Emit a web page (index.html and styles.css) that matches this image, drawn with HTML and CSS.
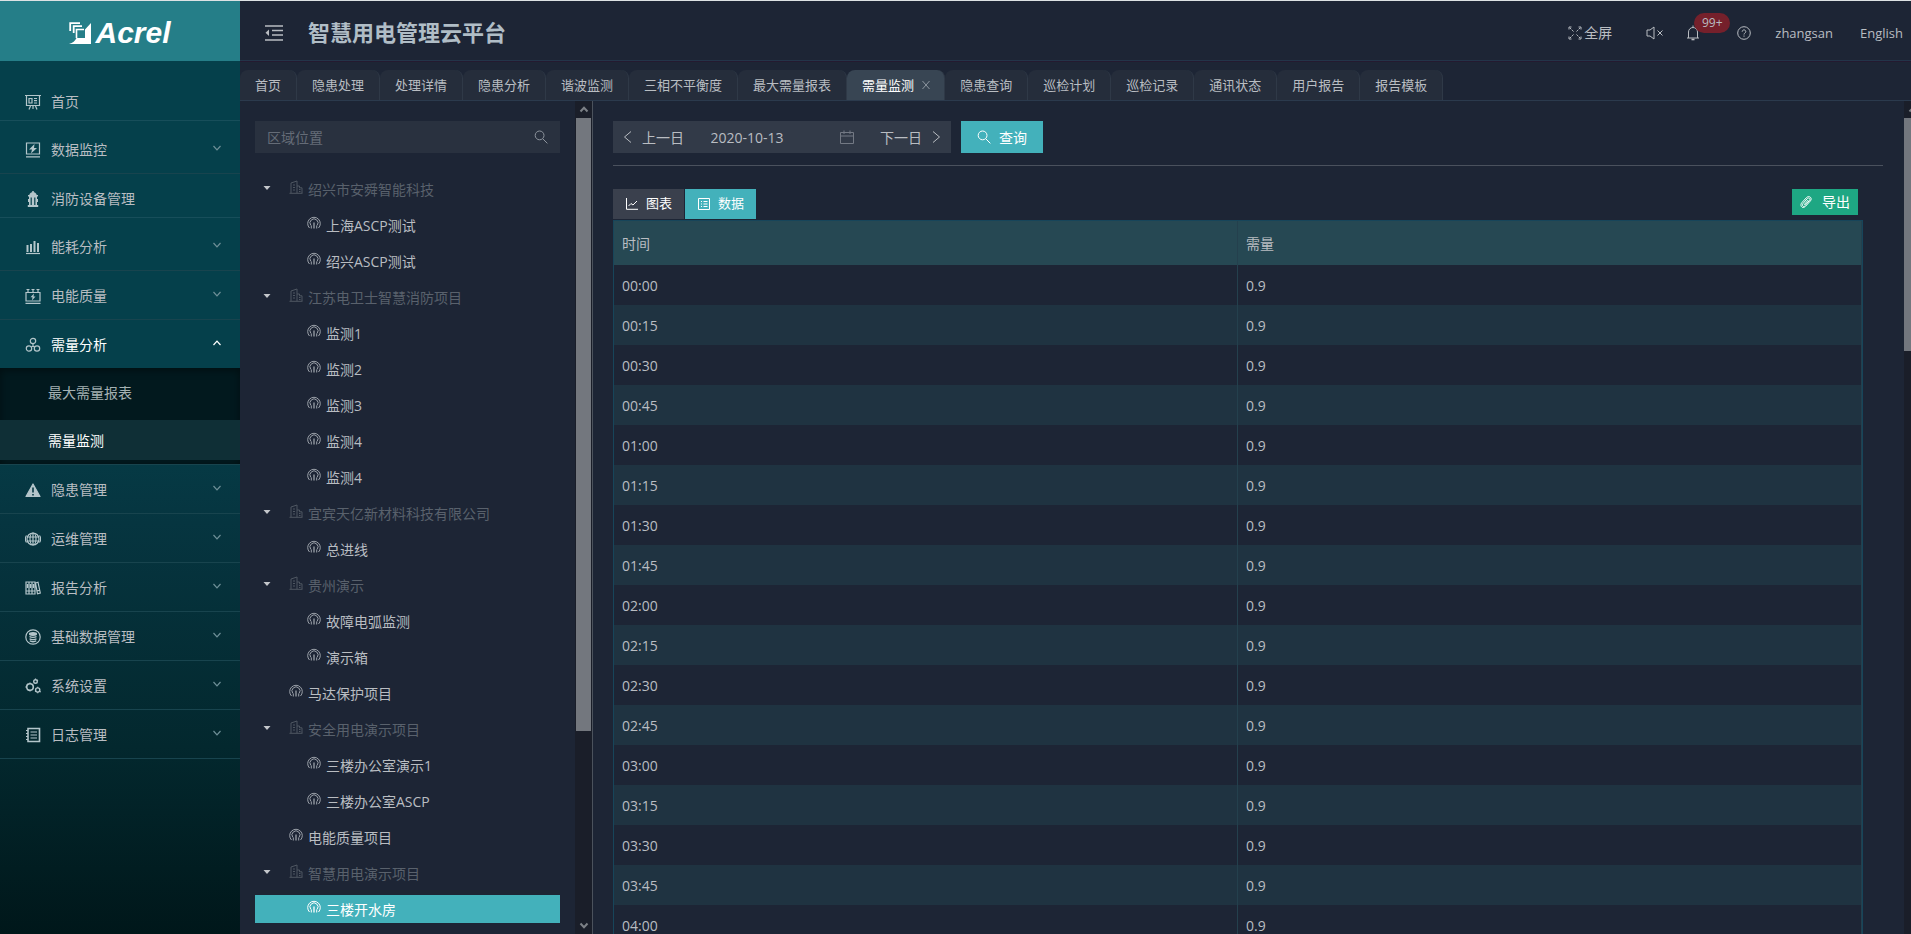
FILE: index.html
```html
<!DOCTYPE html>
<html lang="zh-CN">
<head>
    <meta charset="UTF-8">
    <meta name="viewport" content="width=device-width, initial-scale=1.0">
    <title>智慧用电管理云平台</title>
    <link rel="stylesheet" href="styles.css">
</head>
<body>
    <svg class="sprite" aria-hidden="true">
        <symbol id="i-down" viewBox="0 0 10 10"><path d="M1.5 3 5 6.8 8.500 3"/></symbol>
        <symbol id="i-up" viewBox="0 0 10 10"><path d="M1.5 7 5 3.200 8.500 7"/></symbol>
        <symbol id="i-left" viewBox="0 0 14 14"><path d="M10 1.5 3.5 7l6.5 5.5"/></symbol>
        <symbol id="i-right" viewBox="0 0 14 14"><path d="M4 1.5 10.5 7 4 12.5"/></symbol>
        <symbol id="i-search" viewBox="0 0 14 14"><circle cx="5.6" cy="5.4" r="4.4"/><path d="m8.8 8.8 4.6 4.6"/></symbol>
        <symbol id="i-building" viewBox="0 0 14 14"><path d="M.5 13.3h13M2 13V3l6-2v12M8 6h2.500v1.800H13V13M4 5h2M4 7.500h2M4 10h2M10 9.500h1.500M10 11.500h1.500"/></symbol>
        <symbol id="i-gauge" viewBox="0 0 14 14"><path d="M2.500 12A6.300 6.300 0 1 1 11.500 12M3.800 9.300A4 4 0 1 1 10.200 9.300M4.300 9.500v3M9.700 9.500v3"/><path d="M7 6.500v6" stroke-width="1.300"/></symbol>
        <symbol id="i-caret" viewBox="0 0 8 8"><path d="M.5 2h7L4 6z" fill="currentColor" stroke="none"/></symbol>
    </svg>

    <div class="layout">
        <aside class="sidebar">
            <a class="logo" href="#">
                <svg viewBox="0 0 22 22"><path d="M1.200 9V1.200H11M4.700 11V4.200H13" stroke-width="1.800"/><path d="M7.500 16V7.500H15" stroke-width="1.600"/><path d="M22 1v21H0c4-1 6-3 7.500-6H16V7.500z" fill="#fff" stroke="none"/></svg>
                <span>Acrel</span>
            </a>
            <ul class="menu">
                <li class="leaf"><a href="#"><svg viewBox="0 0 16 16"><path d="M0 1.500h16M1.500 2v9.500h13V2M4 4.500h3V9H4zM9 4.500h3M9 6.700h3M9 9h3M5.500 12 4 15.500M10.500 12l1.500 3.500M8 12v3"/></svg><span>首页</span></a></li>
                <li class="sub"><a href="#"><svg viewBox="0 0 16 16"><path d="M1.500 1h13v11h-13zM1 14.800h14"/><path d="M9.500 2 4 7.500h3L6 11.500l6-5.500H9z" fill="currentColor" stroke="none"/></svg><span>数据监控</span><svg class="arrow"><use href="#i-down"/></svg></a></li>
                <li class="leaf"><a href="#"><svg viewBox="0 0 16 16"><path d="M7.200 0h1.600v1.300c1.600.3 2.700 1.300 2.900 2.700H13v1.500h-1V8h1v3h-1v3h1.200v2H2.800v-2H4v-3H3V8h1V5.500H3V4h1.300c.2-1.400 1.300-2.400 2.900-2.700z" fill="currentColor" stroke="none"/><path d="M6.200 6.500V14M9.800 6.500V14" stroke="#05404b"/></svg><span>消防设备管理</span></a></li>
                <li class="sub"><a href="#"><svg viewBox="0 0 16 16"><path d="M1 14.500h14"/><path d="M2.500 6v7M6 5v8M9.500 2v11M13 4v9" stroke-width="2"/></svg><span>能耗分析</span><svg class="arrow"><use href="#i-down"/></svg></a></li>
                <li class="sub"><a href="#"><svg viewBox="0 0 16 16"><path d="M1 4.500h14V13H1zM.5 15.300h15M3 4V1.500M8 4V1.500M13 4V1.500M1.500 1.500h3M6.500 1.500h3M11.500 1.500h3"/><path d="M9 5.500 5.500 9.300h2L7 12.500l3.500-4h-2z" fill="currentColor" stroke="none"/></svg><span>电能质量</span><svg class="arrow"><use href="#i-down"/></svg></a></li>
                <li class="sub open">
                    <a href="#"><svg viewBox="0 0 16 16"><circle cx="8" cy="4" r="2.700"/><circle cx="4" cy="11.500" r="2.700"/><circle cx="12" cy="11.500" r="2.700"/><path d="M8 6.700v2.500M6.200 10 8 9.200l1.800.8"/></svg><span>需量分析</span><svg class="arrow"><use href="#i-up"/></svg></a>
                    <ul class="submenu">
                        <li><a href="#">最大需量报表</a></li>
                        <li class="active"><a href="#">需量监测</a></li>
                    </ul>
                </li>
                <li class="sub"><a href="#"><svg viewBox="0 0 16 16"><path d="M8 2 15 14.500H1z" fill="currentColor" stroke-linejoin="round"/><path d="M8 5.500v5M8 12v1.500" stroke="#063642" stroke-width="1.600"/></svg><span>隐患管理</span><svg class="arrow"><use href="#i-down"/></svg></a></li>
                <li class="sub"><a href="#"><svg viewBox="0 0 16 16"><circle cx="8" cy="8" r="6"/><ellipse cx="8" cy="8" rx="3" ry="6"/><path d="M2 6h12M2 10h12M8 2v12M1.500 4.500c-1.300 2-1.300 5 0 7M14.500 4.500c1.300 2 1.300 5 0 7"/></svg><span>运维管理</span><svg class="arrow"><use href="#i-down"/></svg></a></li>
                <li class="sub"><a href="#"><svg viewBox="0 0 16 16"><path d="M1 2h9v12H1zM4 2v12M7 2v12M1 11h9M2.500 4v4M5.500 4v4M8.500 4v4M10.500 3l2.500-.8L15.300 13l-2.800.8zM12 11l3-.8"/></svg><span>报告分析</span><svg class="arrow"><use href="#i-down"/></svg></a></li>
                <li class="sub"><a href="#"><svg viewBox="0 0 16 16"><circle cx="8" cy="8" r="7.200"/><ellipse cx="8" cy="5" rx="3.500" ry="1.300" fill="currentColor"/><path d="M4.500 7.500c1.500 1.200 5.500 1.200 7 0M4.500 9.700c1.500 1.200 5.500 1.200 7 0M4.800 11.800c1.500 1.200 5 1.200 6.400 0" stroke-width="1.400"/></svg><span>基础数据管理</span><svg class="arrow"><use href="#i-down"/></svg></a></li>
                <li class="sub"><a href="#"><svg viewBox="0 0 16 16"><circle cx="5" cy="9" r="3.300" stroke-width="1.600"/><circle cx="10.500" cy="3.500" r="1.800" stroke-width="1.400"/><circle cx="12.700" cy="12" r="2.100" stroke-width="1.400"/><path d="M5 4.500v1M5 12.500v1M.3 9h1M2 6l.7.7M2 12l.7-.7M10.500.5v1M13 2l-1 .6M12.700 8.700v1M12.700 14.300v1M15 13.500l.8.500M10 13.500l.8-.5"/></svg><span>系统设置</span><svg class="arrow"><use href="#i-down"/></svg></a></li>
                <li class="sub"><a href="#"><svg viewBox="0 0 16 16"><path d="M3 1.500h11.500v13H3z" stroke-width="1.600"/><path d="M5.500 5h6.500M5.500 8h6.500M5.500 11h6.500M1 3.500h2M1 6.500h2M1 9.500h2M1 12.500h2"/></svg><span>日志管理</span><svg class="arrow"><use href="#i-down"/></svg></a></li>
            </ul>
        </aside>

        <div class="page">
            <header class="header">
                <button class="fold" aria-label="收起菜单"><svg viewBox="0 0 18 18"><path d="M0 2h18M7 6.500h11M7 11h11M0 16h18" stroke-width="1.600"/><path d="M4 5.500v6.500L.5 8.800z" fill="currentColor" stroke="none"/></svg></button>
                <h1>智慧用电管理云平台</h1>
                <nav class="tools">
                    <a class="full" href="#"><svg viewBox="0 0 14 14"><path d="M5.500 5.500 1.500 1.500M8.500 5.500l4-4M5.500 8.500l-4 4M8.500 8.500l4 4" stroke-dasharray="2 1"/><path d="M1 3.500V1h2.500M10.500 1H13v2.500M1 10.500V13h2.500M10.500 13H13v-2.500"/></svg>全屏</a>
                    <button class="mute" aria-label="静音"><svg viewBox="0 0 18 14"><path d="M1 4h3l4-3v12l-4-3H1zM11.500 4.500l5 5M16.500 4.500l-5 5"/></svg></button>
                    <button class="bell" aria-label="消息"><svg viewBox="0 0 14 16"><path d="M1 13h12M2.500 13V7a4.500 4.500 0 0 1 9 0v6M7 .5V2.500"/><path d="M5.500 14.500h3" stroke-width="1.600"/></svg><span class="badge">99+</span></button>
                    <button class="help" aria-label="帮助"><svg viewBox="0 0 14 14"><circle cx="7" cy="7" r="6.300"/><path d="M5.200 5.700c0-2.400 3.600-2.400 3.600 0C8.800 7 7 7 7 8.500M7 9.500v1.200"/></svg></button>
                    <a class="user" href="#">zhangsan</a>
                    <a class="lang" href="#">English</a>
                </nav>
            </header>

            <nav class="tabs">
                <a href="#">首页</a>
                <a href="#">隐患处理</a>
                <a href="#">处理详情</a>
                <a href="#">隐患分析</a>
                <a href="#">谐波监测</a>
                <a href="#">三相不平衡度</a>
                <a href="#">最大需量报表</a>
                <a class="active" href="#">需量监测<svg viewBox="0 0 10 10"><path d="m1.500 1 7 8M8.500 1l-7 8"/></svg></a>
                <a href="#">隐患查询</a>
                <a href="#">巡检计划</a>
                <a href="#">巡检记录</a>
                <a href="#">通讯状态</a>
                <a href="#">用户报告</a>
                <a href="#">报告模板</a>
            </nav>

            <div class="body">
                <section class="tree-panel">
                    <div class="tree-wrap">
                        <div class="tree-search">
                            <input type="text" placeholder="区域位置" aria-label="区域位置">
                            <svg><use href="#i-search"/></svg>
                        </div>
                        <ul class="tree">
                            <li class="group"><svg class="caret"><use href="#i-caret"/></svg><svg class="node"><use href="#i-building"/></svg><span>绍兴市安舜智能科技</span></li>
                            <li class="child"><svg class="node"><use href="#i-gauge"/></svg><span>上海ASCP测试</span></li>
                            <li class="child"><svg class="node"><use href="#i-gauge"/></svg><span>绍兴ASCP测试</span></li>
                            <li class="group"><svg class="caret"><use href="#i-caret"/></svg><svg class="node"><use href="#i-building"/></svg><span>江苏电卫士智慧消防项目</span></li>
                            <li class="child"><svg class="node"><use href="#i-gauge"/></svg><span>监测1</span></li>
                            <li class="child"><svg class="node"><use href="#i-gauge"/></svg><span>监测2</span></li>
                            <li class="child"><svg class="node"><use href="#i-gauge"/></svg><span>监测3</span></li>
                            <li class="child"><svg class="node"><use href="#i-gauge"/></svg><span>监测4</span></li>
                            <li class="child"><svg class="node"><use href="#i-gauge"/></svg><span>监测4</span></li>
                            <li class="group"><svg class="caret"><use href="#i-caret"/></svg><svg class="node"><use href="#i-building"/></svg><span>宜宾天亿新材料科技有限公司</span></li>
                            <li class="child"><svg class="node"><use href="#i-gauge"/></svg><span>总进线</span></li>
                            <li class="group"><svg class="caret"><use href="#i-caret"/></svg><svg class="node"><use href="#i-building"/></svg><span>贵州演示</span></li>
                            <li class="child"><svg class="node"><use href="#i-gauge"/></svg><span>故障电弧监测</span></li>
                            <li class="child"><svg class="node"><use href="#i-gauge"/></svg><span>演示箱</span></li>
                            <li class="root"><svg class="node"><use href="#i-gauge"/></svg><span>马达保护项目</span></li>
                            <li class="group"><svg class="caret"><use href="#i-caret"/></svg><svg class="node"><use href="#i-building"/></svg><span>安全用电演示项目</span></li>
                            <li class="child"><svg class="node"><use href="#i-gauge"/></svg><span>三楼办公室演示1</span></li>
                            <li class="child"><svg class="node"><use href="#i-gauge"/></svg><span>三楼办公室ASCP</span></li>
                            <li class="root"><svg class="node"><use href="#i-gauge"/></svg><span>电能质量项目</span></li>
                            <li class="group"><svg class="caret"><use href="#i-caret"/></svg><svg class="node"><use href="#i-building"/></svg><span>智慧用电演示项目</span></li>
                            <li class="child selected"><svg class="node"><use href="#i-gauge"/></svg><span>三楼开水房</span></li>
                        </ul>
                    </div>
                    <div class="scrollbar" aria-hidden="true">
                        <svg><use href="#i-up"/></svg>
                        <div class="thumb tree-thumb"></div>
                        <div class="track"></div>
                        <svg><use href="#i-down"/></svg>
                    </div>
                </section>

                <main class="content">
                    <div class="content-wrap">
                        <div class="toolbar">
                            <div class="date-group">
                                <button><svg><use href="#i-left"/></svg><span>上一日</span></button>
                                <label class="date">
                                    <input type="text" value="2020-10-13" aria-label="日期">
                                    <svg viewBox="0 0 14 14"><path d="M.5 2.500h13v11H.5zM.5 6h13M4 .5v3.500M10 .5v3.500"/></svg>
                                </label>
                                <button><span>下一日</span><svg><use href="#i-right"/></svg></button>
                            </div>
                            <button class="query"><svg><use href="#i-search"/></svg><span>查询</span></button>
                        </div>

                        <div class="panel">
                            <div class="panel-head">
                                <div class="switch">
                                    <button><svg viewBox="0 0 12 12"><path d="M.5 0v11.300H12M2.500 8l2.500-2.500 2 1.500 4-4"/></svg>图表</button>
                                    <button class="on"><svg viewBox="0 0 12 12"><path d="M.5.5h11v11H.5zM3 3.500h1M5.500 3.500h4M3 6h1M5.500 6h4M3 8.500h1M5.500 8.500h4"/></svg>数据</button>
                                </div>
                                <button class="export"><svg viewBox="0 0 12 12"><path d="M8.200 4 4.600 8.200c-.5.6.2 1.300.9.700l4-4.500c1.300-1.600-.6-3.300-2.100-1.900L3 7.500c-1.700 2.200.8 4.300 2.800 2.500l4.700-5.200C12.600 2 9.300-.8 6.700 1.400L1.800 6.700C-.4 9.500 2 12.500 4.500 11.300"/></svg>导出</button>
                            </div>
                            <table>
                                <thead>
                                    <tr><th>时间</th><th>需量</th></tr>
                                </thead>
                                <tbody>
                                    <tr><td>00:00</td><td>0.9</td></tr>
                                    <tr><td>00:15</td><td>0.9</td></tr>
                                    <tr><td>00:30</td><td>0.9</td></tr>
                                    <tr><td>00:45</td><td>0.9</td></tr>
                                    <tr><td>01:00</td><td>0.9</td></tr>
                                    <tr><td>01:15</td><td>0.9</td></tr>
                                    <tr><td>01:30</td><td>0.9</td></tr>
                                    <tr><td>01:45</td><td>0.9</td></tr>
                                    <tr><td>02:00</td><td>0.9</td></tr>
                                    <tr><td>02:15</td><td>0.9</td></tr>
                                    <tr><td>02:30</td><td>0.9</td></tr>
                                    <tr><td>02:45</td><td>0.9</td></tr>
                                    <tr><td>03:00</td><td>0.9</td></tr>
                                    <tr><td>03:15</td><td>0.9</td></tr>
                                    <tr><td>03:30</td><td>0.9</td></tr>
                                    <tr><td>03:45</td><td>0.9</td></tr>
                                    <tr><td>04:00</td><td>0.9</td></tr>
                                </tbody>
                            </table>
                        </div>
                    </div>
                    <div class="scrollbar page-scroll" aria-hidden="true">
                        <svg><use href="#i-up"/></svg>
                        <div class="thumb page-thumb"></div>
                        <div class="track"></div>
                    </div>
                </main>
            </div>
        </div>
    </div>
</body>
</html>
```
FILE: styles.css
```css
* {
    box-sizing: border-box;
}
body {
    margin: 0;
    background-color: #1d2535;
    color: #b9bdc2;
    font-family: "Open Sans", "Noto Sans CJK SC", sans-serif;
    font-size: 14px;
    line-height: 20px;
    overflow: hidden;
}
ul {
    list-style: none;
    margin: 0;
    padding: 0;
}
a {
    color: inherit;
    text-decoration: none;
}
button,
input {
    border: none;
    padding: 0;
    background: none;
    color: inherit;
    font: inherit;
}
input:focus {
    outline: none;
}
button {
    display: flex;
    align-items: center;
    cursor: pointer;
}
svg {
    flex: none;
    width: 14px;
    height: 14px;
    fill: none;
    stroke: currentColor;
}
.sprite {
    display: none;
}
.layout {
    display: flex;
    height: 100vh;
    border-top: 1px solid #dde2e4;
}

/* sidebar */
.sidebar {
    flex: none;
    width: 240px;
    background: linear-gradient(#05404b 0, #05404b 40%, #063540 56%, #03282e 80%, #00171a 100%);
}
.logo {
    display: flex;
    align-items: center;
    justify-content: center;
    gap: 4px;
    height: 60px;
    padding-top: 4px;
    background-color: #257e88;
    color: #fff;
    font: italic bold 30px "Liberation Sans", sans-serif;
}
.logo svg {
    width: 22px;
    height: 22px;
}
.menu {
    padding-top: 16px;
}
.menu a {
    display: flex;
    align-items: center;
    height: 40px;
    padding: 2px 18px 0 25px;
}
.menu svg {
    width: 16px;
    height: 16px;
    margin-right: 10px;
    color: #b4c6cb;
    stroke-width: 1.2;
}
.menu .arrow {
    width: 10px;
    height: 10px;
    margin: 0 0 4px auto;
    color: #6f9098;
}
.leaf {
    margin: 4px 0 8px;
    border-bottom: 1px solid #174e5a;
}
.leaf a {
    height: 39px;
}
.sub {
    padding: 4px 0;
    border-bottom: 1px solid #18444e;
}
.leaf + .sub {
    padding-top: 0;
}
.sub.open {
    padding-bottom: 0;
    color: #fff;
}
.menu .open .arrow {
    color: #fff;
}
.submenu {
    margin-top: 4px;
    padding: 4px 0;
    background-color: #02191e;
    box-shadow: inset 0 2px 8px rgba(0, 0, 0, 0.45);
    color: #a5b1b3;
}
.submenu a {
    padding-left: 48px;
}
.submenu .active {
    margin-top: 8px;
    background-color: #0f2f36;
    color: #fff;
}

/* header */
.page {
    flex: 1;
    display: flex;
    flex-direction: column;
    min-width: 0;
}
.header {
    flex: none;
    display: flex;
    align-items: center;
    height: 60px;
    padding: 4px 8px 0 25px;
    border-bottom: 1px solid #233449;
}
.fold svg {
    width: 18px;
    height: 18px;
}
.header h1 {
    margin: 0 0 2px 25px;
    color: #b0bdc6;
    font-size: 22px;
    line-height: 30px;
}
.tools {
    display: flex;
    align-items: center;
    margin-left: auto;
}
.full {
    display: flex;
    align-items: center;
    gap: 2px;
}
.mute {
    margin-left: 34px;
}
.mute svg {
    width: 18px;
}
.bell {
    position: relative;
    margin-left: 22px;
}
.bell svg {
    height: 16px;
}
.badge {
    position: absolute;
    top: -12px;
    left: 8px;
    width: 36px;
    height: 20px;
    border-radius: 10px;
    background-color: #75202b;
    font-size: 12px;
    line-height: 20px;
    text-align: center;
}
.help {
    margin-left: 37px;
}
.user,
.lang {
    font-size: 13px;
}
.user {
    margin: 0 27px 0 24px;
}

/* tabs */
.tabs {
    flex: none;
    display: flex;
    height: 40px;
    padding-top: 8px;
    border-top: 1px solid #241a30;
    border-bottom: 1px solid #2b3a4d;
    font-size: 13px;
    line-height: 32px;
}
.tabs a {
    display: flex;
    align-items: center;
    padding: 0 15px;
    border-right: 1px solid #2f3947;
    border-radius: 8px 8px 0 0;
    background-color: #252d3b;
}
.tabs .active {
    padding-right: 13px;
    background-color: #384553;
    color: #fff;
}
.tabs svg {
    width: 10px;
    height: 10px;
    margin-left: 7px;
    color: #8c959f;
}

.body {
    flex: 1;
    display: flex;
    min-height: 0;
}

/* tree */
.tree-panel {
    flex: none;
    display: flex;
    width: 353px;
    border-right: 1px solid #4b525c;
}
.tree-wrap {
    flex: 1;
    padding: 20px 15px 0;
    overflow: hidden;
}
.tree-search {
    display: flex;
    align-items: center;
    height: 32px;
    margin-bottom: 22px;
    padding: 0 12px;
    background-color: #29313f;
}
.tree-search input {
    flex: 1;
    min-width: 0;
    padding-top: 2px;
}
.tree-search input::placeholder {
    color: #656c77;
    opacity: 1;
}
.tree-search svg {
    color: #8e959e;
}
.tree li {
    display: flex;
    align-items: center;
    height: 28px;
    margin-bottom: 8px;
}
.tree span {
    padding-top: 2px;
}
.tree .node {
    margin: 0 5px 4px 0;
    color: #9ba1a9;
}
.tree .caret {
    width: 8px;
    height: 8px;
    margin: 0 18px 2px 8px;
    color: #c4c7cb;
}
.tree .group {
    color: #59616c;
}
.tree .group .node {
    color: #4f5762;
}
.tree .child {
    padding-left: 52px;
}
.tree .root {
    padding-left: 34px;
}
.tree .selected,
.tree .selected .node {
    color: #fff;
}
.tree .selected {
    background-color: #43b1bb;
}

/* scrollbars */
.scrollbar {
    flex: none;
    display: flex;
    flex-direction: column;
    align-items: center;
    width: 17px;
    background-color: #1a1e29;
    color: #7c8086;
}
.scrollbar svg {
    width: 10px;
    height: 17px;
    stroke-width: 2;
}
.thumb {
    flex: none;
    width: 15px;
    background-color: #73777e;
}
.track {
    flex: 1;
}
.tree-thumb {
    height: 77%;
    max-height: 613px;
}
.page-thumb {
    width: 17px;
    height: 28%;
}

/* content */
.content {
    flex: 1;
    display: flex;
    min-width: 0;
    overflow: hidden;
}
.content-wrap {
    flex: 1;
    padding: 20px 21px 0 20px;
}
.page-scroll {
    margin-right: -10px;
}
.toolbar {
    display: flex;
    gap: 10px;
    height: 45px;
    border-bottom: 1px solid #4a515d;
}
.toolbar button {
    height: 32px;
}
.toolbar span,
.date input {
    padding-top: 2px;
}
.date-group {
    display: flex;
    justify-content: space-between;
    width: 338px;
    height: 32px;
    padding: 0 8px;
    background-color: #323a48;
}
.date-group button {
    gap: 7px;
}
.date {
    display: flex;
    align-items: center;
    width: 143px;
}
.date input {
    flex: 1;
    min-width: 0;
}
.date svg {
    color: #737984;
}
.query {
    gap: 8px;
    padding: 0 16px;
    background-color: #43b1bb;
    color: #fff;
}
.panel {
    margin: 23px 20px 0 0;
}
.panel-head {
    display: flex;
    justify-content: space-between;
    height: 31px;
    padding-right: 5px;
}
.switch {
    display: flex;
    gap: 1px;
}
.switch button {
    gap: 8px;
    height: 30px;
    padding: 0 12px 2px 13px;
    background-color: #3a404d;
    color: #fff;
    font-size: 13px;
}
.switch svg,
.export svg {
    width: 12px;
    height: 12px;
}
.switch svg {
    margin-top: 2px;
}
.switch .on {
    background-color: #43b1bb;
}
.export {
    gap: 10px;
    height: 26px;
    padding: 0 8px;
    background-color: #1ea783;
    color: #fff;
}
table {
    width: 100%;
    table-layout: fixed;
    border-collapse: separate;
    border-spacing: 0;
    border: 1px solid #17455a;
}
th,
td {
    height: 40px;
    padding: 2px 8px 0;
    border-right: 1px solid #24404d;
    text-align: left;
    font-weight: normal;
}
th {
    height: 44px;
    background-color: #264853;
}
tbody tr:nth-child(even) {
    background-color: #1f3341;
}
```
